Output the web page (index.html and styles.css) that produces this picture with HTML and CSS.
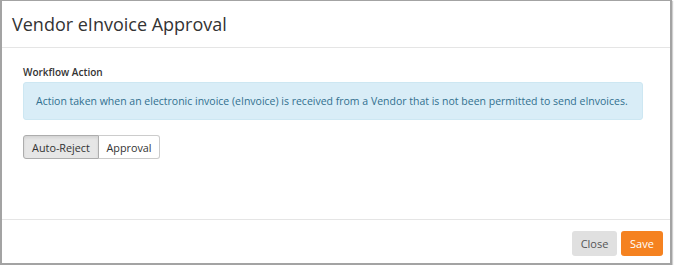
FILE: index.html
```html
<!DOCTYPE html>
<html>
<head>
<meta charset="utf-8">
<link rel="stylesheet" href="styles.css">
</head>
<body>
<div class="modal">
  <div class="modal-header">
    <h4 class="modal-title">Vendor eInvoice Approval</h4>
  </div>
  <div class="modal-body">
    <div class="field-label">Workflow Action</div>
    <div class="alert">Action taken when an electronic invoice (eInvoice) is received from a Vendor that is not been permitted to send eInvoices.</div>
    <div class="btn-group">
      <button class="seg active">Auto-Reject</button>
      <button class="seg">Approval</button>
    </div>
  </div>
  <div class="modal-footer">
    <button class="btn btn-close">Close</button>
    <button class="btn btn-save">Save</button>
  </div>
</div>
</body>
</html>
```
FILE: styles.css
```css
html, body {
  margin: 0;
  padding: 0;
  background: #fff;
}
body {
  font-family: "Open Sans", "Liberation Sans", sans-serif;
  color: #333;
}
.modal {
  width: 668px;
  height: 262px;
  border-style: solid;
  border-color: #a3a3a3;
  border-width: 1px 2px 2px 2px;
  box-shadow: 1px 1px 1px #cfcfcf;
  display: flex;
  flex-direction: column;
  background: #fff;
}
.modal-header {
  border-bottom: 1px solid #e5e5e5;
  display: flex;
  align-items: center;
  padding-left: 10px;
  box-sizing: border-box;
  flex: 0 0 47px;
}
.modal-title {
  margin: 0;
  font-size: 18px;
  font-weight: 400;
  color: #333;
  line-height: 1;
}
.modal-body {
  flex: 1;
  padding: 17px 27px 0 21px;
  display: flex;
  flex-direction: column;
}
.field-label {
  font-size: 10px;
  font-weight: 600;
  color: #333;
  line-height: 14px;
  margin-bottom: 3px;
}
.alert {
  background: #d9edf7;
  border: 1px solid #cde7f2;
  border-radius: 3px;
  color: #31708f;
  font-size: 10.5px;
  line-height: 14px;
  height: 38px;
  box-sizing: border-box;
  display: flex;
  align-items: center;
  padding-left: 12px;
  white-space: nowrap;
}
.btn-group {
  display: flex;
  margin-top: 15px;
}
.seg {
  font-family: inherit;
  font-size: 10.8px;
  color: #333;
  background: #fff;
  border: 1px solid #ccc;
  height: 24px;
  padding: 0;
  margin: 0;
  box-sizing: border-box;
  white-space: nowrap;
}
.seg:first-child {
  border-radius: 3px 0 0 3px;
  width: 76px;
}
.seg:last-child {
  border-radius: 0 3px 3px 0;
  border-left: none;
  width: 61px;
}
.seg.active {
  background: #e6e6e6;
  border-color: #adadad;
  box-shadow: inset 0 2px 3px rgba(0,0,0,0.08);
}
.modal-footer {
  flex: 0 0 44px;
  box-sizing: border-box;
  border-top: 1px solid #e5e5e5;
  display: flex;
  justify-content: flex-end;
  align-items: flex-start;
  gap: 4px;
  padding: 11px 7px 0 0;
}
.btn {
  font-family: inherit;
  font-size: 11px;
  height: 25px;
  border: none;
  border-radius: 3px;
  padding: 0;
  margin: 0;
}
.btn-close {
  width: 45px;
  background: #e0e0e0;
  color: #555;
}
.btn-save {
  width: 42px;
  background: #f58220;
  color: #fff;
}
```
